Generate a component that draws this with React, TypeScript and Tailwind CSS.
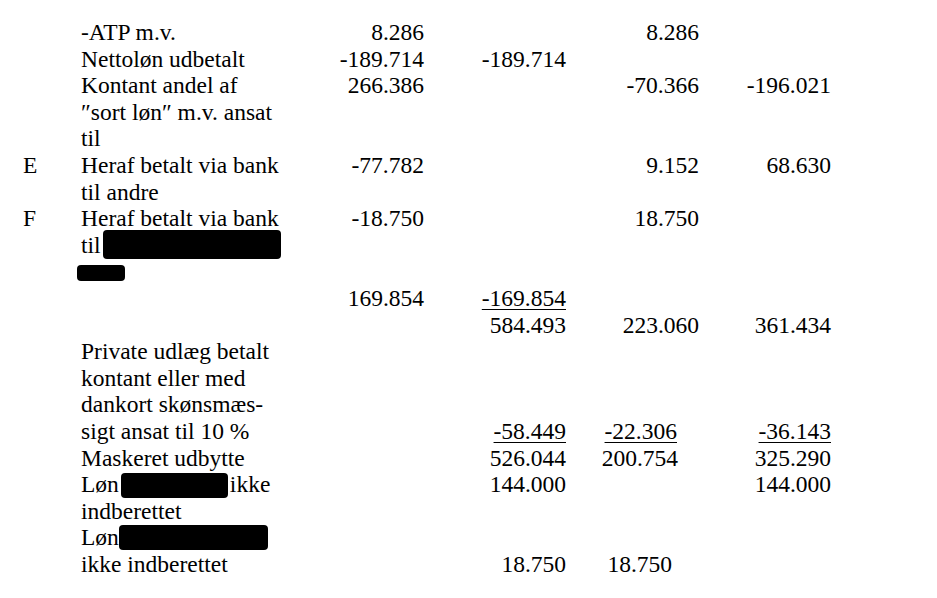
type Cell = { v: string; u?: boolean; pr?: string };
type Row = {
  mark?: string;
  label: React.ReactNode[];
  cols: (Cell | null)[];
  bottom?: boolean;
};

function Blot({ className }: { className: string }) {
  return <span className={"inline-block bg-black rounded-[4px] align-middle " + className} />;
}

const rows: Row[] = [
  { label: ["-ATP m.v."], cols: [{ v: "8.286" }, null, { v: "8.286" }, null] },
  { label: ["Nettoløn udbetalt"], cols: [{ v: "-189.714" }, { v: "-189.714" }, null, null] },
  {
    label: ["Kontant andel af", "″sort løn″ m.v. ansat", "til"],
    cols: [{ v: "266.386" }, null, { v: "-70.366" }, { v: "-196.021" }],
  },
  {
    mark: "E",
    label: ["Heraf betalt via bank", "til andre"],
    cols: [{ v: "-77.782" }, null, { v: "9.152" }, { v: "68.630" }],
  },
  {
    mark: "F",
    label: [
      "Heraf betalt via bank",
      <>
        til<Blot className="w-[178px] h-[29px] ml-[2px] -mt-[5px]" />
      </>,
      <Blot className="w-[48px] h-[16px] -ml-[4px] -mt-[2px]" />,
    ],
    cols: [{ v: "-18.750" }, null, { v: "18.750" }, null],
  },
  { label: [""], cols: [{ v: "169.854" }, { v: "-169.854", u: true }, null, null] },
  { label: [""], cols: [null, { v: "584.493" }, { v: "223.060" }, { v: "361.434" }] },
  {
    label: ["Private udlæg betalt", "kontant eller med", "dankort skønsmæs-", "sigt ansat til 10 %"],
    cols: [null, { v: "-58.449", u: true }, { v: "-22.306", u: true, pr: "pr-[22px]" }, { v: "-36.143", u: true }],
    bottom: true,
  },
  {
    label: ["Maskeret udbytte"],
    cols: [null, { v: "526.044" }, { v: "200.754", pr: "pr-[21px]" }, { v: "325.290" }],
  },
  {
    label: [
      <>
        Løn<Blot className="w-[107px] h-[25px] mx-[2px] -mt-[2px]" />ikke
      </>,
      "indberettet",
    ],
    cols: [null, { v: "144.000" }, null, { v: "144.000" }],
  },
  {
    label: [
      <>
        Løn<Blot className="w-[149px] h-[25px] -mt-[4px]" />
      </>,
      "ikke indberettet",
    ],
    cols: [null, { v: "18.750" }, { v: "18.750", pr: "pr-[27px]" }, null],
    bottom: true,
  },
];

export default function App() {
  return (
    <div
      className="w-[937px] h-[598px] overflow-hidden bg-white text-black pt-[19px] text-[23.5px] leading-[26.6px]"
      style={{ fontFamily: '"Liberation Serif", "Times New Roman", serif' }}
    >
      {rows.map((r, i) => (
        <div key={i} className="grid grid-cols-[81px_205px_138px_142px_133px_132px]">
          <div className="pl-[23px]">{r.mark}</div>
          <div className="flex flex-col">
            {r.label.map((l, j) => (
              <div key={j} className="h-[26.6px] whitespace-nowrap">
                {l}
              </div>
            ))}
          </div>
          {r.cols.map((c, j) => (
            <div key={j} className={"text-right " + (r.bottom ? "self-end " : "") + (c?.pr ?? "")}>
              {c && (
                <span className={c.u ? "underline decoration-1 underline-offset-[3px]" : ""}>{c.v}</span>
              )}
            </div>
          ))}
        </div>
      ))}
    </div>
  );
}
